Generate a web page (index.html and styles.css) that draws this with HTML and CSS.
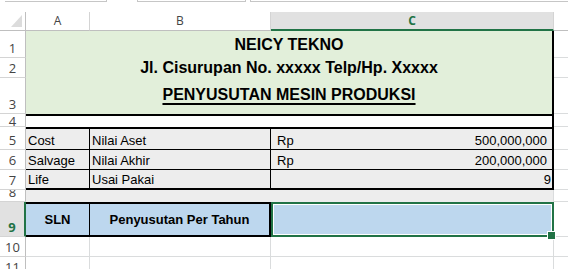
FILE: index.html
```html
<!DOCTYPE html>
<html lang="id">
<head>
    <meta charset="UTF-8">
    <meta name="viewport" content="width=device-width, initial-scale=1.0">
    <title>Penyusutan Mesin Produksi</title>
    <link rel="stylesheet" href="styles.css">
</head>
<body>
    <!-- bottom edge of the formula bar -->
    <div class="formula-strip">
        <div class="name-box"></div>
        <div class="formula-box"></div>
        <div class="formula-input"></div>
    </div>

    <div class="sheet">
        <!-- column headers -->
        <div class="corner">
            <svg width="11" height="12" viewBox="0 0 11 12"><polygon points="11,0 11,12 0,12" fill="#dcdcdc"/></svg>
        </div>
        <div class="col-head">A</div>
        <div class="col-head">B</div>
        <div class="col-head active">C</div>
        <div class="col-head last"></div>

        <!-- rows 1-3: title block -->
        <div class="row-head">1</div>
        <div class="title">
            <div class="title-line l1">NEICY TEKNO</div>
            <div class="title-line l2">Jl. Cisurupan No. xxxxx Telp/Hp. Xxxxx</div>
            <div class="title-line l3"><span class="underline">PENYUSUTAN MESIN PRODUKSI</span></div>
        </div>
        <div class="cell last"></div>
        <div class="row-head">2</div>
        <div class="cell last"></div>
        <div class="row-head">3</div>
        <div class="cell last"></div>

        <!-- row 4 -->
        <div class="row-head short">4</div>
        <div class="cell spacer"></div>
        <div class="cell last"></div>

        <!-- rows 5-7: data -->
        <div class="row-head">5</div>
        <div class="cell data top">Cost</div>
        <div class="cell data top">Nilai Aset</div>
        <div class="cell data top edge money"><span>Rp</span><span>500,000,000</span></div>
        <div class="cell last"></div>

        <div class="row-head">6</div>
        <div class="cell data">Salvage</div>
        <div class="cell data">Nilai Akhir</div>
        <div class="cell data edge money"><span>Rp</span><span>200,000,000</span></div>
        <div class="cell last"></div>

        <div class="row-head">7</div>
        <div class="cell data bottom">Life</div>
        <div class="cell data bottom">Usai Pakai</div>
        <div class="cell data bottom edge number">9</div>
        <div class="cell last"></div>

        <!-- row 8 -->
        <div class="row-head">8</div>
        <div class="cell band"></div>
        <div class="cell last"></div>

        <!-- row 9: result -->
        <div class="row-head active">9</div>
        <div class="cell result">SLN</div>
        <div class="cell result wide">Penyusutan Per Tahun</div>
        <div class="cell result selected"></div>
        <div class="cell last"></div>

        <div class="row-head">10</div>
        <div class="cell"></div>
        <div class="cell"></div>
        <div class="cell"></div>
        <div class="cell last"></div>

        <div class="row-head">11</div>
        <div class="cell"></div>
        <div class="cell"></div>
        <div class="cell"></div>
        <div class="cell last"></div>
    </div>
</body>
</html>
```

FILE: styles.css
```css
* {
    box-sizing: border-box;
}

body {
    margin: 0;
    width: 568px;
    height: 269px;
    overflow: hidden;
    background: #fff;
    color: #000;
    font-family: "Liberation Sans", Arial, sans-serif;
}

/* Formula bar remnant */
.formula-strip {
    display: flex;
    height: 12px;
}

.name-box {
    margin-left: 5px;
    width: 102px;
    height: 2px;
    border-right: 1px solid #c6c6c6;
    border-bottom: 1px solid #c6c6c6;
}

.formula-box {
    margin-left: 30px;
    width: 109px;
    height: 2px;
    border-left: 1px solid #c6c6c6;
    border-right: 1px solid #c6c6c6;
    border-bottom: 1px solid #c6c6c6;
}

.formula-input {
    flex: 1;
    margin-left: 4px;
    height: 2px;
    border-left: 1px solid #c6c6c6;
    border-bottom: 1px solid #c6c6c6;
}

/* Worksheet grid */
.sheet {
    display: grid;
    grid-template-columns: 26px 64px 181px 283px 14px;
    grid-template-rows: 19px 27px 20px 36px 13px 23px 20px 20px 12px 35px 20px 20px;
}

.corner {
    display: flex;
    align-items: flex-end;
    justify-content: flex-end;
    padding: 0 3px 3px 0;
    border-right: 1px solid #bfbfbf;
    border-bottom: 1px solid #bfbfbf;
}

.corner svg {
    display: block;
}

.col-head {
    display: flex;
    align-items: center;
    justify-content: center;
    font-family: "Open Sans", sans-serif;
    font-size: 12px;
    line-height: 18px;
    color: #444;
    border-right: 1px solid #d4d4d4;
    border-bottom: 1px solid #bfbfbf;
}

.col-head.active {
    background: #e1e1e1;
    color: #217346;
    font-weight: bold;
    border-bottom: 2px solid #217346;
}

.col-head.last {
    border-right: none;
}

.row-head {
    display: flex;
    align-items: flex-end;
    justify-content: center;
    overflow: hidden;
    padding-bottom: 1px;
    font-family: "Open Sans", sans-serif;
    font-size: 13px;
    line-height: 16px;
    color: #444;
    border-right: 1px solid #bfbfbf;
    border-bottom: 1px solid #d4d4d4;
}

/* row 4 is shorter than its label, keep the digit on top */
.row-head.short {
    position: relative;
    z-index: 1;
    overflow: visible;
    align-items: center;
    padding: 2px 0 0;
    line-height: 10px;
}

.row-head.active {
    background: #e1e1e1;
    color: #217346;
    font-weight: bold;
    border-right: 2px solid #217346;
}

.cell {
    display: flex;
    align-items: flex-end;
    padding: 0 2px;
    font-size: 13px;
    line-height: 16px;
    white-space: nowrap;
    border-right: 1px solid #dadcdd;
    border-bottom: 1px solid #dadcdd;
}

.cell.last {
    border-right: none;
}

/* Title block (merged A1:C3), its bottom border runs into row 4 */
.title {
    grid-column: span 3;
    grid-row: span 3;
    margin-bottom: -2px;
    display: grid;
    grid-template-rows: 27px 20px 36px;
    background: #e2efda;
    border-right: 2px solid #000;
    border-bottom: 2px solid #000;
    font-size: 16px;
    line-height: 18px;
    font-weight: bold;
}

.title-line {
    display: flex;
    align-items: flex-end;
    justify-content: center;
}

.l1 {
    padding-bottom: 4px;
}

.l2 {
    padding-bottom: 1px;
}

.l3 {
    padding-bottom: 10px;
}

.underline {
    text-decoration: underline;
    text-decoration-thickness: 2px;
    text-underline-offset: 3px;
}

.spacer {
    grid-column: span 3;
    border-bottom: none;
    border-right: 2px solid #000;
}

/* Data rows */
.data {
    background: #ededed;
    border-right: 1px solid #000;
    border-bottom: 1px solid #000;
}

.data.top {
    border-top: 2px solid #000;
}

.data.bottom {
    border-bottom: 2px solid #000;
}

.data.edge {
    border-right: 2px solid #000;
}

.money {
    justify-content: space-between;
    padding: 0 5px 0 6px;
}

.number {
    justify-content: flex-end;
    padding-right: 1px;
}

.band {
    grid-column: span 3;
    background: #ededed;
    border-bottom: none;
}

/* Result row */
.result {
    align-items: center;
    justify-content: center;
    background: #bdd7ee;
    font-weight: bold;
    border-top: 2px solid #000;
    border-bottom: 2px solid #000;
    border-right: 1px solid #000;
}

.result.wide {
    border-right: 2px solid #000;
}

.result.selected {
    position: relative;
    border: 2px solid #217346;
    box-shadow: inset 0 0 0 1px #fff;
}

.result.selected::after {
    content: "";
    position: absolute;
    right: -4px;
    bottom: -5px;
    width: 7px;
    height: 7px;
    background: #217346;
    border: 1px solid #fff;
}
```
